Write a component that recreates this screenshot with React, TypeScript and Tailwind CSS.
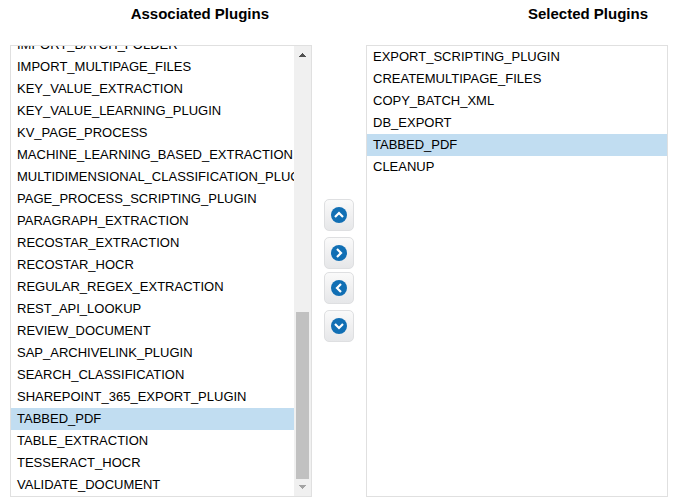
import React, { useLayoutEffect, useRef, useState } from 'react'

const ASSOCIATED_PLUGINS = [
	'IMPORT_BATCH_FOLDER',
	'IMPORT_MULTIPAGE_FILES',
	'KEY_VALUE_EXTRACTION',
	'KEY_VALUE_LEARNING_PLUGIN',
	'KV_PAGE_PROCESS',
	'MACHINE_LEARNING_BASED_EXTRACTION',
	'MULTIDIMENSIONAL_CLASSIFICATION_PLUGIN',
	'PAGE_PROCESS_SCRIPTING_PLUGIN',
	'PARAGRAPH_EXTRACTION',
	'RECOSTAR_EXTRACTION',
	'RECOSTAR_HOCR',
	'REGULAR_REGEX_EXTRACTION',
	'REST_API_LOOKUP',
	'REVIEW_DOCUMENT',
	'SAP_ARCHIVELINK_PLUGIN',
	'SEARCH_CLASSIFICATION',
	'SHAREPOINT_365_EXPORT_PLUGIN',
	'TABBED_PDF',
	'TABLE_EXTRACTION',
	'TESSERACT_HOCR',
	'VALIDATE_DOCUMENT',
]

const SELECTED_PLUGINS = [
	'EXPORT_SCRIPTING_PLUGIN',
	'CREATEMULTIPAGE_FILES',
	'COPY_BATCH_XML',
	'DB_EXPORT',
	'TABBED_PDF',
	'CLEANUP',
]

interface PluginListProps {
	labelledBy: string
	plugins: string[]
	selected: string
	onSelect: (plugin: string) => void
	startAtEnd?: boolean
}

const PluginList: React.FC<PluginListProps> = ({
	labelledBy,
	plugins,
	selected,
	onSelect,
	startAtEnd = false,
}) => {
	const listRef = useRef<HTMLUListElement>(null)

	useLayoutEffect(() => {
		if (startAtEnd && listRef.current) {
			listRef.current.scrollTop = listRef.current.scrollHeight
		}
	}, [startAtEnd])

	return (
		<ul
			ref={listRef}
			role="listbox"
			aria-labelledby={labelledBy}
			tabIndex={0}
			className="min-w-0 flex-1 overflow-x-hidden overflow-y-auto text-[13px] outline-none [scrollbar-width:none]"
		>
			{plugins.map((plugin) => (
				<li
					key={plugin}
					role="option"
					aria-selected={plugin === selected}
					onClick={() => onSelect(plugin)}
					className="cursor-default px-1.5 leading-[22px] whitespace-nowrap aria-selected:bg-[#c1ddf1]"
				>
					{plugin}
				</li>
			))}
		</ul>
	)
}

const ScrollTrack: React.FC = () => (
	<div
		aria-hidden="true"
		className="flex w-[17px] shrink-0 flex-col items-center bg-[#f0f0f0]"
	>
		<svg width="17" height="17" shapeRendering="crispEdges">
			<path
				d="M8 7h1v1h1v1h1v1h1v1H5v-1h1V9h1V8h1z"
				fill="#505050"
			/>
		</svg>
		<div className="flex w-[13px] flex-1 flex-col justify-end">
			<div className="h-[167px] bg-[#c1c1c1]" />
		</div>
		<svg width="17" height="17" shapeRendering="crispEdges">
			<path
				d="M5 6h7v1h-1v1h-1v1H9v1H8V9H7V8H6V7H5z"
				fill="#a3a3a3"
			/>
		</svg>
	</div>
)

interface MoveButtonProps {
	label: string
	path: string
}

const MoveButton: React.FC<MoveButtonProps> = ({ label, path }) => (
	<button
		type="button"
		aria-label={label}
		className="flex h-8 w-[30px] items-center justify-center rounded-[5px] border border-[#dedfe1] bg-linear-to-b from-[#fafafa] via-[#f0f0f1] to-[#e6e7e9]"
	>
		<svg width="16" height="16" viewBox="0 0 16 16" fill="none">
			<circle cx="8" cy="8" r="8" fill="#116fb4" />
			<path d={path} stroke="#fff" strokeWidth="2.2" />
		</svg>
	</button>
)

const App: React.FC = () => {
	const [associated, setAssociated] = useState('TABBED_PDF')
	const [selected, setSelected] = useState('TABBED_PDF')

	return (
		<main className="grid h-screen grid-cols-[minmax(0,1fr)_54px_minmax(0,1fr)] grid-rows-[auto_minmax(0,1fr)] bg-white pr-3 pb-[5px] pl-2.5 font-['Liberation_Sans',Arial,sans-serif] text-black">
			<h2
				id="associated-title"
				className="pr-[43px] pb-[17px] text-right text-[15px] leading-7 font-bold"
			>
				Associated Plugins
			</h2>
			<h2
				id="selected-title"
				className="col-start-3 pr-5 text-right text-[15px] leading-7 font-bold"
			>
				Selected Plugins
			</h2>

			<div className="flex border border-[#e0e0e0]">
				<PluginList
					labelledBy="associated-title"
					plugins={ASSOCIATED_PLUGINS}
					selected={associated}
					onSelect={setAssociated}
					startAtEnd
				/>
				<ScrollTrack />
			</div>

			<div className="flex flex-col items-center justify-center gap-[3px] pb-0.5">
				<div className="flex flex-col gap-1.5">
					<MoveButton label="Move up" path="M4 10l4-4 4 4" />
					<MoveButton label="Add plugin" path="M6 4l4 4-4 4" />
				</div>
				<div className="flex flex-col gap-1.5">
					<MoveButton label="Remove plugin" path="M10 4L6 8l4 4" />
					<MoveButton label="Move down" path="M4 6l4 4 4-4" />
				</div>
			</div>

			<div className="flex border border-[#e0e0e0]">
				<PluginList
					labelledBy="selected-title"
					plugins={SELECTED_PLUGINS}
					selected={selected}
					onSelect={setSelected}
				/>
			</div>
		</main>
	)
}

export default App
